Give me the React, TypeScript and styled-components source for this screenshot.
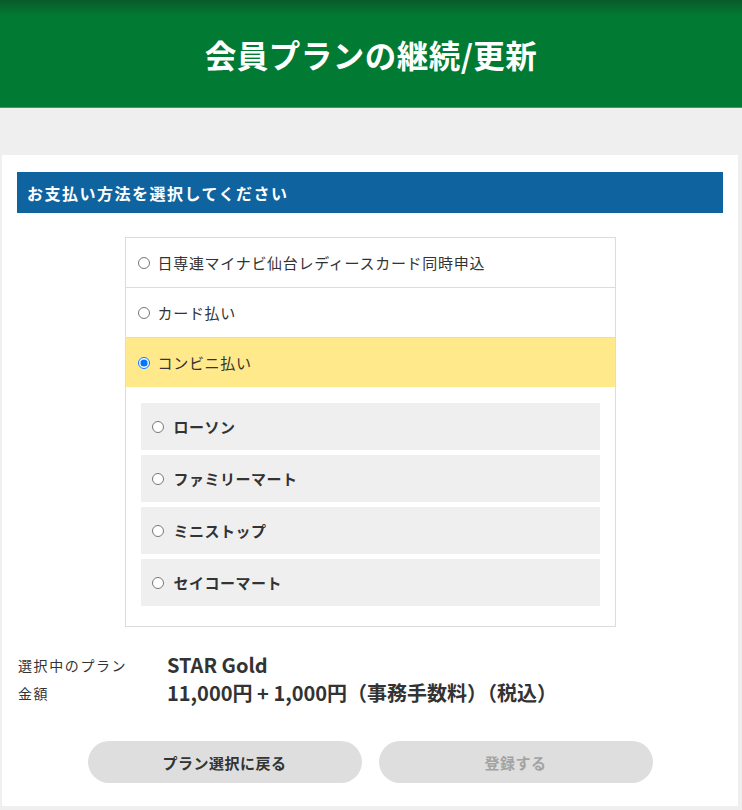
import { useState } from "react";
import styled, { createGlobalStyle } from "styled-components";

const GlobalStyle = createGlobalStyle`
  html, body {
    margin: 0;
    padding: 0;
    background: #efefef;
  }
  body {
    font-family: "Noto Sans CJK JP", "Noto Sans", sans-serif;
    color: #333;
  }
`;

const Page = styled.div`
  width: 742px;
  min-height: 810px;
  background: #efefef;
`;

const Header = styled.header`
  height: 107px;
  display: flex;
  align-items: center;
  justify-content: center;
  background: linear-gradient(to bottom, #0a5a2a 0px, #017a33 16px, #017a33 100%);
  border-bottom: 1px solid #3f9a5e;
`;

const Title = styled.h1`
  margin: 0;
  font-size: 31.5px;
  font-weight: 700;
  color: #fff;
  letter-spacing: 0.5px;
`;

const Card = styled.main`
  margin: 47px 4px 0 2px;
  background: #fff;
  padding: 17px 15px 23px;
`;

const SectionBar = styled.h2`
  margin: 0;
  height: 41px;
  display: flex;
  align-items: center;
  padding: 0 10px;
  background: #0f64a0;
  color: #fff;
  font-size: 16px;
  font-weight: 700;
  letter-spacing: 1.5px;
`;

const OptionBox = styled.div`
  width: 491px;
  margin: 24px auto 0;
  border: 1px solid #dcdcdc;
  box-sizing: border-box;
`;

const OptionRow = styled.label<{ $active?: boolean }>`
  box-sizing: border-box;
  height: ${(p) => (p.$active ? "49px" : "50px")};
  display: flex;
  align-items: center;
  gap: 8px;
  padding: 0 12px;
  background: ${(p) => (p.$active ? "#ffe98a" : "#fff")};
  border-bottom: ${(p) => (p.$active ? "none" : "1px solid #dcdcdc")};
  font-size: 15px;
  letter-spacing: 0.7px;
  color: #333;
  cursor: pointer;
`;

const Radio = styled.input`
  margin: 0;
  width: 12px;
  height: 12px;
`;

const SubList = styled.div`
  display: flex;
  flex-direction: column;
  gap: 5px;
  padding: 16px 15px 20px;
`;

const SubRow = styled.label`
  height: 47px;
  display: flex;
  align-items: center;
  gap: 10px;
  padding: 0 11px;
  background: #efefef;
  font-size: 15px;
  font-weight: 700;
  letter-spacing: 0.5px;
  color: #333;
  cursor: pointer;
`;

const Summary = styled.dl`
  margin: 24px 0 0 1px;
  display: grid;
  grid-template-columns: 149px 1fr;
`;

const SummaryLabel = styled.dt`
  font-size: 14px;
  line-height: 28px;
  color: #333;
  letter-spacing: 1.6px;
`;

const SummaryValue = styled.dd`
  margin: 0;
  font-size: 20px;
  line-height: 28px;
  font-weight: 700;
  color: #333;
`;

const ButtonRow = styled.div`
  display: flex;
  justify-content: center;
  gap: 17px;
  margin-top: 34px;
`;

const PillButton = styled.button<{ $muted?: boolean }>`
  width: 274px;
  height: 42px;
  border: none;
  border-radius: 21px;
  background: #dedede;
  font-family: "Noto Sans CJK JP", sans-serif;
  font-size: 15px;
  font-weight: 700;
  letter-spacing: 0.5px;
  color: ${(p) => (p.$muted ? "#a3a3a3" : "#333")};
  cursor: ${(p) => (p.$muted ? "default" : "pointer")};
`;

const methods = [
  { id: "nissenren", label: "日専連マイナビ仙台レディースカード同時申込" },
  { id: "card", label: "カード払い" },
  { id: "conveni", label: "コンビニ払い" },
];

const stores = ["ローソン", "ファミリーマート", "ミニストップ", "セイコーマート"];

export default function App() {
  const [method, setMethod] = useState("conveni");
  const [store, setStore] = useState("");

  return (
    <Page>
      <GlobalStyle />
      <Header>
        <Title>会員プランの継続/更新</Title>
      </Header>

      <Card>
        <SectionBar>お支払い方法を選択してください</SectionBar>

        <OptionBox>
          {methods.map((m) => (
            <OptionRow key={m.id} $active={method === m.id}>
              <Radio
                type="radio"
                name="method"
                checked={method === m.id}
                onChange={() => setMethod(m.id)}
              />
              {m.label}
            </OptionRow>
          ))}
          {method === "conveni" && (
            <SubList>
              {stores.map((s) => (
                <SubRow key={s}>
                  <Radio
                    type="radio"
                    name="store"
                    checked={store === s}
                    onChange={() => setStore(s)}
                  />
                  {s}
                </SubRow>
              ))}
            </SubList>
          )}
        </OptionBox>

        <Summary>
          <SummaryLabel>選択中のプラン</SummaryLabel>
          <SummaryValue>STAR Gold</SummaryValue>
          <SummaryLabel>金額</SummaryLabel>
          <SummaryValue>11,000円 + 1,000円（事務手数料）（税込）</SummaryValue>
        </Summary>

        <ButtonRow>
          <PillButton type="button">プラン選択に戻る</PillButton>
          <PillButton type="button" $muted disabled={!store}>
            登録する
          </PillButton>
        </ButtonRow>
      </Card>
    </Page>
  );
}
